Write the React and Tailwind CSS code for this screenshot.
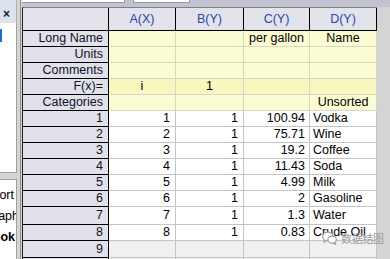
import React from "react";

const labelRows = [
  { h: "Long Name", a: "", b: "", c: "per gallon", d: "Name" },
  { h: "Units", a: "", b: "", c: "", d: "" },
  { h: "Comments", a: "", b: "", c: "", d: "" },
  { h: "F(x)=", a: "i", b: "1", c: "", d: "", fx: true },
  { h: "Categories", a: "", b: "", c: "", d: "Unsorted" },
];

const dataRows = [
  { n: 1, a: "1", b: "1", c: "100.94", d: "Vodka" },
  { n: 2, a: "2", b: "1", c: "75.71", d: "Wine" },
  { n: 3, a: "3", b: "1", c: "19.2", d: "Coffee" },
  { n: 4, a: "4", b: "1", c: "11.43", d: "Soda" },
  { n: 5, a: "5", b: "1", c: "4.99", d: "Milk" },
  { n: 6, a: "6", b: "1", c: "2", d: "Gasoline" },
  { n: 7, a: "7", b: "1", c: "1.3", d: "Water", tall: true },
  { n: 8, a: "8", b: "1", c: "0.83", d: "Crude Oil" },
];

const rowHead =
  "w-[86px] shrink-0 flex items-center justify-end pr-[5px] bg-[#e1e1e9] border-r border-b border-black text-[#10102a]";

function LeftPanel() {
  return (
    <div className="w-[17px] shrink-0 flex flex-col h-full">
      <div className="h-[23px] bg-[#dae3ee] border-r border-[#a8b0bc] flex items-center pl-[3px] pt-[4px]">
        <span className="text-[12px] font-bold leading-none text-[#202020]">×</span>
      </div>
      <div className="h-[150px] bg-white border-r border-b border-[#a0a0a0] pt-[6px]">
        <div className="w-[2px] h-[13px] bg-[#1a6fd0]" />
      </div>
      <div className="h-[6px]" />
      <div className="flex-1 bg-white border-r border-t border-[#a0a0a0] flex flex-col pt-[7px] gap-[5px] overflow-hidden">
        <div className="flex justify-end pr-[2px] whitespace-nowrap h-[16px] items-center">Report</div>
        <div className="flex justify-end mr-[-3px] whitespace-nowrap h-[16px] items-center">Graph</div>
        <div className="flex justify-end pr-[1px] whitespace-nowrap h-[16px] items-center font-bold">Workbook</div>
      </div>
    </div>
  );
}

function Sheet() {
  return (
    <div className="flex flex-col border-l border-[#202020] border-t border-t-[#808080]">
      <div className="flex h-[23px] bg-[#e3e3eb] text-[#2846a8]">
        <div className="w-[86px] shrink-0 border-r border-b border-black" />
        <div className="w-[67px] shrink-0 border-r border-b border-black flex items-center justify-center">A(X)</div>
        <div className="w-[68px] shrink-0 border-r border-b border-black flex items-center justify-center">B(Y)</div>
        <div className="w-[66px] shrink-0 border-r border-b border-black flex items-center justify-center">C(Y)</div>
        <div className="w-[67px] shrink-0 border-r border-b border-black flex items-center justify-center">D(Y)</div>
      </div>
      {labelRows.map((r) => {
        const cell = r.fx
          ? "bg-[#f7f7bf] border-r border-b border-[#d6d6c6] flex items-center justify-center shrink-0 whitespace-nowrap"
          : "bg-[#fcfcd2] border-r border-b border-[#d6d6c6] flex items-center justify-center shrink-0 whitespace-nowrap";
        return (
          <div key={r.h} className="flex h-[16px]">
            <div className={rowHead}>{r.h}</div>
            <div className={`w-[67px] ${cell}`}>{r.a}</div>
            <div className={`w-[68px] ${cell}`}>{r.b}</div>
            <div className={`w-[66px] ${cell}`}>{r.c}</div>
            <div className={`w-[67px] ${cell}`}>{r.d}</div>
          </div>
        );
      })}
      {dataRows.map((r) => (
        <div key={r.n} className={r.tall ? "flex h-[18px]" : "flex h-[16px]"}>
          <div className={rowHead}>{r.n}</div>
          <div className="w-[67px] shrink-0 bg-white border-r border-b border-[#c4c4c4] flex items-center justify-end pr-[5px]">{r.a}</div>
          <div className="w-[68px] shrink-0 bg-white border-r border-b border-[#c4c4c4] flex items-center justify-end pr-[5px]">{r.b}</div>
          <div className="w-[66px] shrink-0 bg-white border-r border-b border-[#c4c4c4] flex items-center justify-end pr-[4px]">{r.c}</div>
          <div className="w-[67px] shrink-0 bg-white border-r border-b border-[#c4c4c4] flex items-center pl-[3px] whitespace-nowrap">{r.d}</div>
        </div>
      ))}
      {[9, 10].map((n) => (
        <div key={n} className="flex h-[17px]">
          <div className={rowHead}>{n}</div>
          <div className="w-[67px] shrink-0 bg-[#f0f0f0] border-r border-b border-[#c4c4c4]" />
          <div className="w-[68px] shrink-0 bg-[#f0f0f0] border-r border-b border-[#c4c4c4]" />
          <div className="w-[66px] shrink-0 bg-[#f0f0f0] border-r border-b border-[#c4c4c4]" />
          <div className="w-[67px] shrink-0 bg-[#f0f0f0] border-r border-b border-[#c4c4c4]" />
        </div>
      ))}
    </div>
  );
}

export default function App() {
  return (
    <div className="relative w-[390px] h-[259px] overflow-hidden flex bg-[#d4d4d4] text-[12.5px] leading-none text-black font-['Liberation_Sans',Arial,sans-serif]">
      <LeftPanel />
      <div className="w-[3px] shrink-0 bg-[#d6d6d6]" />
      <div className="w-px shrink-0 bg-[#8c8c8c]" />
      <div className="w-px shrink-0 bg-[#d6d6d6]" />
      <div className="flex-1 flex flex-col">
        <div className="h-[7px] shrink-0 bg-[#c2c2d0] flex gap-[8px]">
          <div className="w-[103px] h-[3px] bg-white border-b border-r border-[#9a9aa8]" />
          <div className="w-[57px] h-[3px] bg-white border-b border-r border-l border-[#9a9aa8]" />
        </div>
        <div className="flex flex-1">
          <Sheet />
          <div className="flex-1 bg-[#d4d4d4]" />
        </div>
      </div>
      <div className="absolute left-[322px] top-[231px] flex items-center gap-[3px]">
        <svg width="16" height="14" viewBox="0 0 15 13" fill="none" stroke="#9c9c9c" strokeWidth="1.1">
          <ellipse cx="5.5" cy="5" rx="4.8" ry="4" fill="white" />
          <path d="M2.5 8.2 L2 10.5 L4.5 8.8" fill="white" />
          <ellipse cx="9.5" cy="8" rx="4" ry="3.3" fill="white" />
          <path d="M12 10.6 L12.6 12.4 L10.6 11.1" fill="white" />
        </svg>
        <span className="text-[11px] text-[#9a9a9a] font-['Noto_Sans_CJK_SC',sans-serif] tracking-[-0.3px]">数据结图</span>
      </div>
    </div>
  );
}
